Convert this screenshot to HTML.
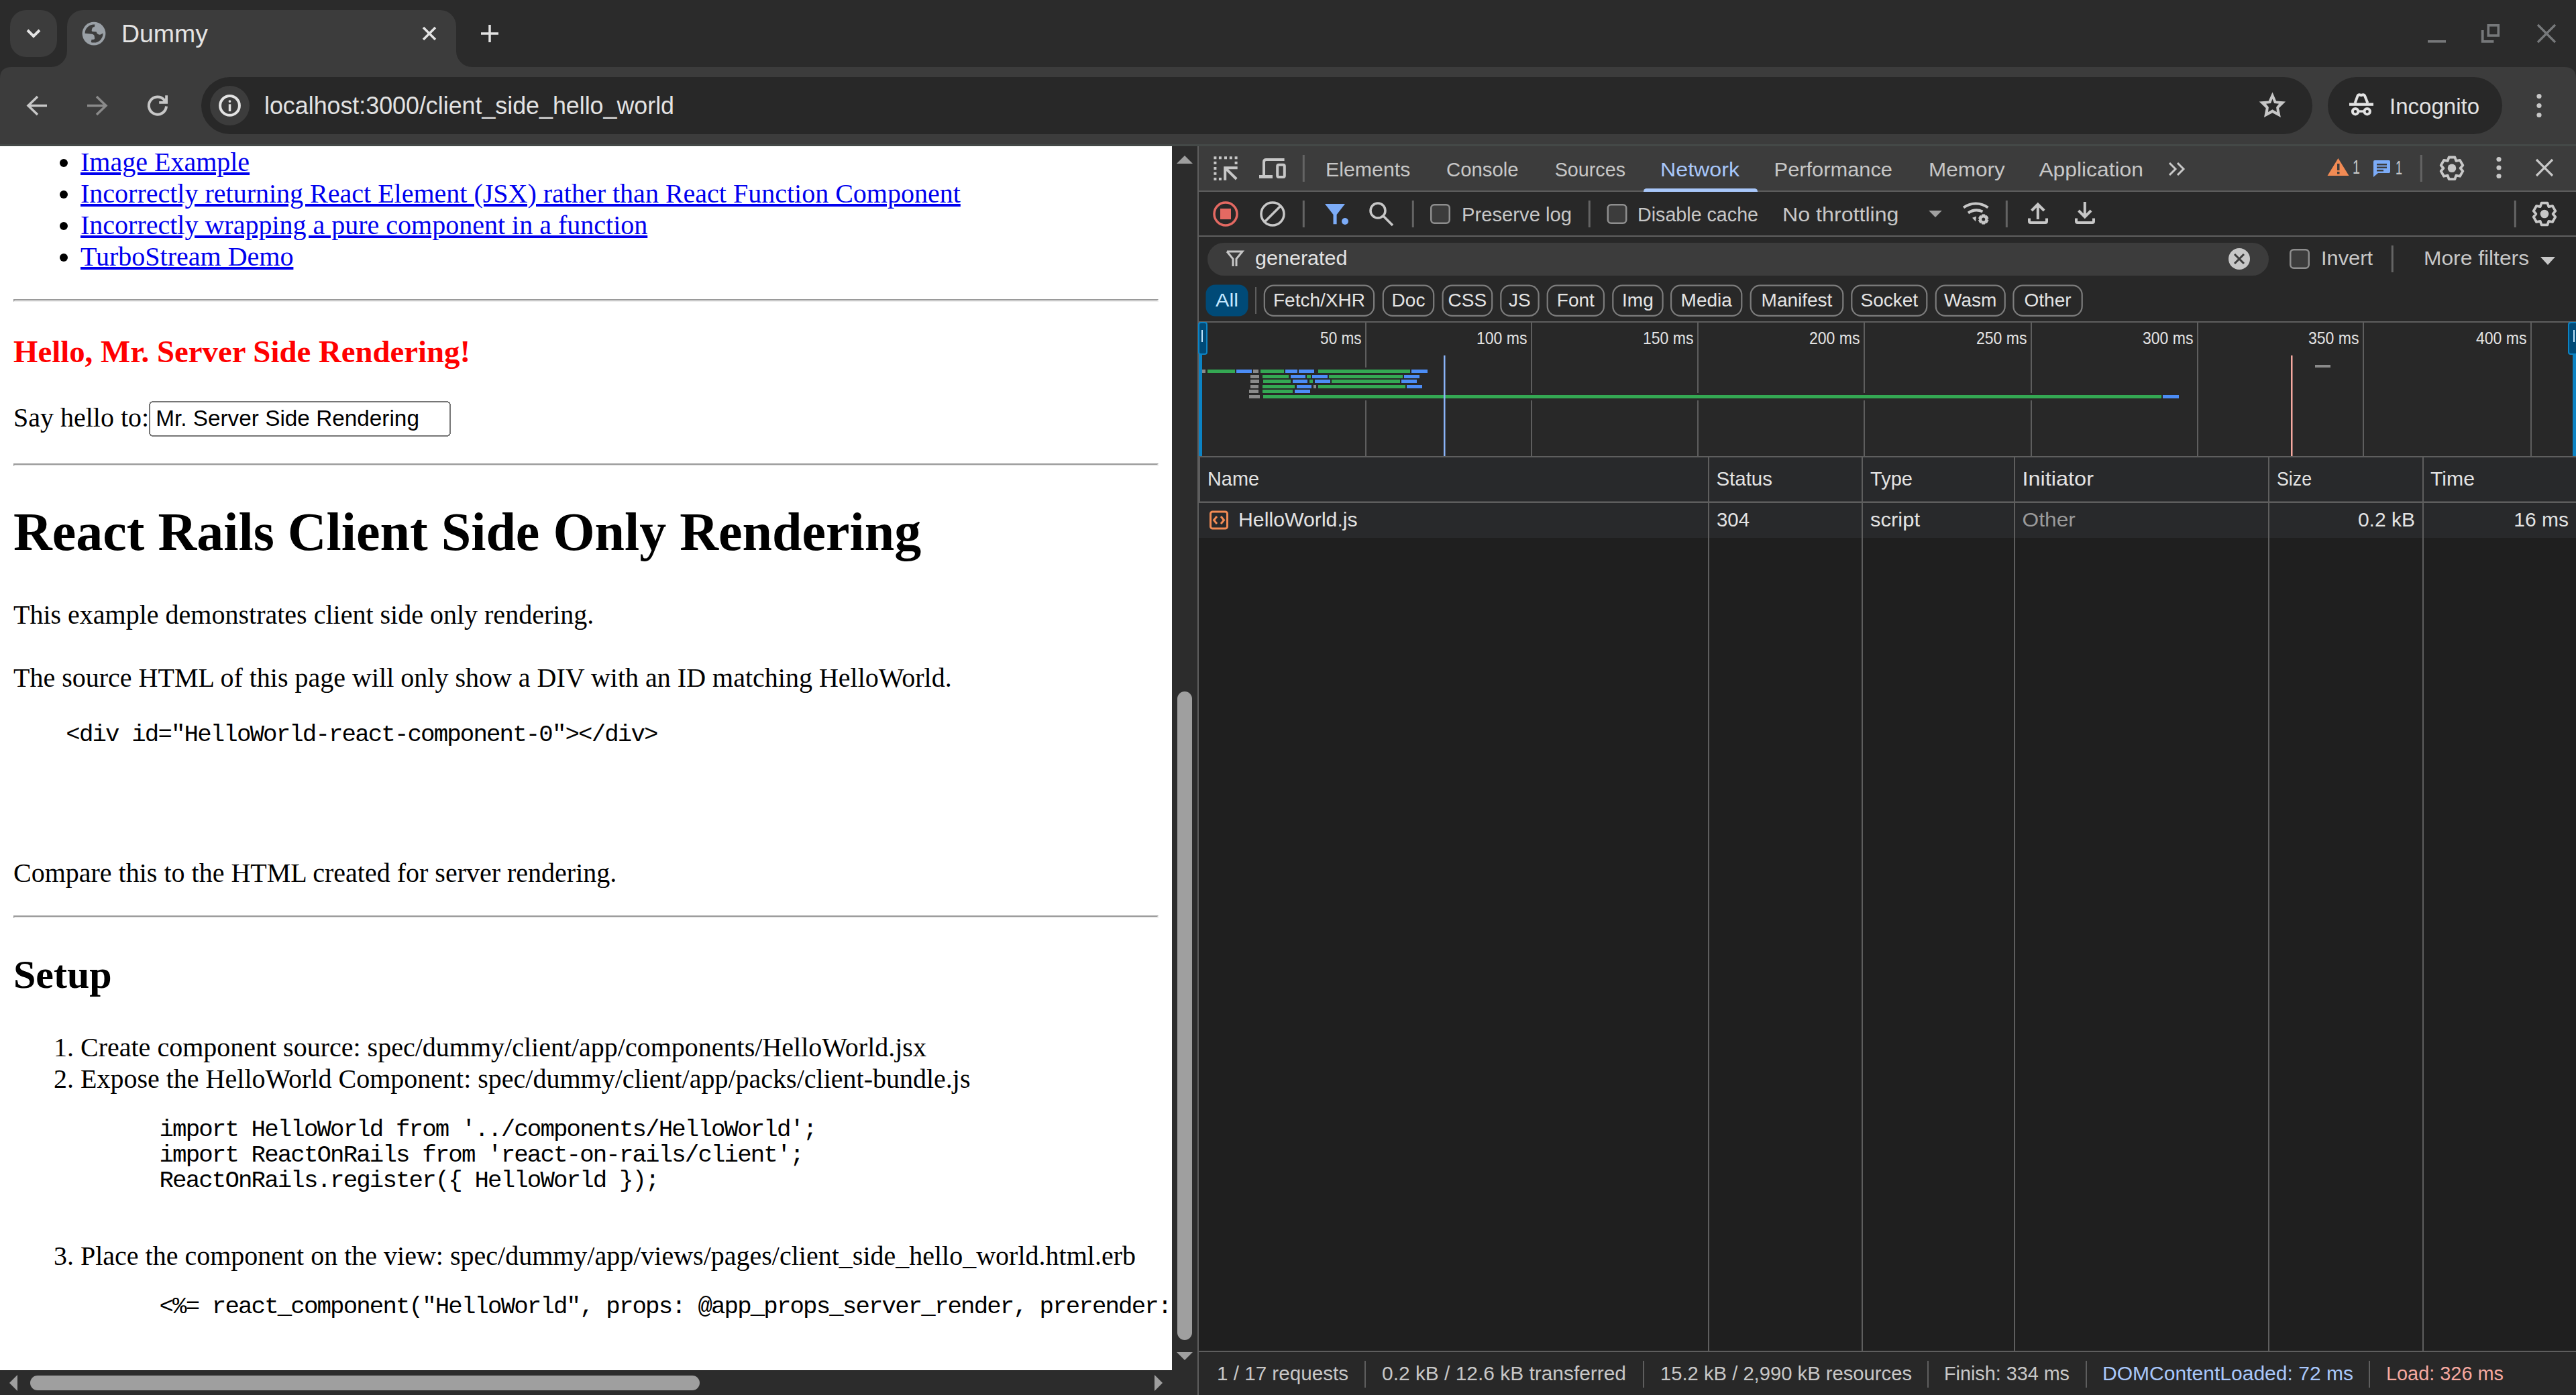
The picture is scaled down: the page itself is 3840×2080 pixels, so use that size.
<!DOCTYPE html><html><head><meta charset="utf-8"><style>
html,body{margin:0;padding:0;}
body{width:3840px;height:2080px;overflow:hidden;position:relative;background:#2b2b2b;font-family:"Liberation Sans",sans-serif;}
#page{position:absolute;left:0;top:218px;width:1747px;height:1825px;overflow:hidden;background:#fff;}
#pz{zoom:2.5;font-family:"Liberation Serif",serif;font-size:16px;color:#000;margin:0 8px;position:relative;top:-16px;}
#pz a{color:#0000ee;}
#pz pre{font-family:"Liberation Mono",monospace;font-size:14.3px;line-height:15.2px;letter-spacing:-0.748px;position:relative;top:0.8px;margin:13px 0;}
#pz input{font-family:"Liberation Sans",sans-serif;font-size:13.333px;}
#ui{position:absolute;left:0;top:0;}
</style></head><body><svg id="ui" width="3840" height="2080" viewBox="0 0 3840 2080" font-family="Liberation Sans, sans-serif"><rect x="0" y="0" width="3840" height="100" fill="#2b2b2b" rx="0" /><rect x="15" y="15" width="70" height="70" fill="#3c3c3c" rx="24" /><path d="M41 45 L50 54 L59 45" fill="none" stroke="#e3e3e3" stroke-width="4"/><path d="M76 100 A24 24 0 0 0 100 76 V39 A24 24 0 0 1 124 15 H656 A24 24 0 0 1 680 39 V76 A24 24 0 0 0 704 100 Z" fill="#3c3c3c"/><path d="M0 218 L0 117 Q0 100 17 100 L3823 100 Q3840 100 3840 117 L3840 218 Z" fill="#3c3c3c"/><rect x="0" y="215" width="3840" height="3" fill="#444947" rx="0" /><circle cx="140" cy="50.1" r="17.4" fill="#9aa0a6"/><circle cx="140" cy="50.1" r="13.5" fill="#3c3c3c"/><path d="M141.8 35.2 A15 15 0 0 1 155 49.8 L153.5 49.5 L150 51.5 Q147 52.2 144.5 49.8 L143.7 47.6 L137.5 47 Q136.5 46.5 136.7 45 L137.6 41.8 Q138.5 40.2 140.8 40 Z" fill="#9aa0a6"/><path d="M126.5 49.7 L137.2 50.8 Q140.5 51.5 140.7 54 L141.2 57.5 Q141 58.8 139 58.9 L136.5 58.9 L135.5 64 A15 15 0 0 1 125 49.5 Z" fill="#9aa0a6"/><text x="181" y="63" font-size="37.5" fill="#e3e3e3" text-anchor="start" textLength="129.0" lengthAdjust="spacingAndGlyphs" font-weight="normal">Dummy</text><path d="M631 41 L649 59 M649 41 L631 59" stroke="#e3e3e3" stroke-width="3.5"/><path d="M730 37 L730 63 M717 50 L743 50" stroke="#e3e3e3" stroke-width="3.5"/><rect x="3619" y="60" width="27" height="3.6" fill="#76787a" rx="0" /><rect x="3709.3" y="37.8" width="15" height="15.2" fill="none" stroke="#76787a" stroke-width="3.6"/><path d="M3700.7 45 V61.9 H3717.4" fill="none" stroke="#76787a" stroke-width="3.8"/><path d="M3783 37 L3809 63 M3809 37 L3783 63" stroke="#76787a" stroke-width="3.4"/><path d="M70 157.5 H44 M56 144 L42 157.5 L56 171" fill="none" stroke="#c7c7c7" stroke-width="3.5"/><path d="M130 157.5 H156 M144 144 L158 157.5 L144 171" fill="none" stroke="#8a8a8a" stroke-width="3.5"/><path d="M244.9 149 A13.1 13.1 0 1 0 248 158.5" fill="none" stroke="#c7c7c7" stroke-width="4"/><path d="M246.2 142.2 H250 V154.7 H237.2 V151.1 H242.5 L246.2 146.5 Z" fill="#c7c7c7"/><rect x="300" y="115" width="3147" height="85" fill="#282828" rx="42.5" /><circle cx="342.5" cy="157.5" r="29.5" fill="#3c3c3c"/><circle cx="342.5" cy="157.4" r="14.4" fill="none" stroke="#e3e3e3" stroke-width="4"/><rect x="340.8" y="155.3" width="3.5" height="10.7" fill="#e3e3e3" rx="0" /><circle cx="342.5" cy="151.1" r="1.9" fill="#e3e3e3"/><text x="394" y="170" font-size="37.5" fill="#e3e3e3" text-anchor="start" textLength="611.0" lengthAdjust="spacingAndGlyphs" font-weight="normal">localhost:3000/client_side_hello_world</text><path fill-rule="evenodd" fill="#c7c7c7" d="M3387.5 137.6 L3393.1 150.6 L3407.1 151.6 L3397.1 161.3 L3399.9 175.1 L3387.5 168.3 L3375 175.1 L3377.7 161.3 L3367.7 151.6 L3381.7 150.6 Z M3387.5 147.4 L3390.1 153.9 L3397.1 154.8 L3393.1 159.7 L3394 167 L3387.5 163.2 L3381 167 L3381.9 159.7 L3378 154.8 L3385 153.9 Z"/><rect x="3470" y="115" width="260" height="85" fill="#282828" rx="42.5" /><path d="M3510.6 153.6 L3514.6 142.6 Q3515.3 141 3517 141.3 L3519.8 142 L3522.6 141.3 Q3524.3 141 3525 142.6 L3529.4 153.6" fill="none" stroke="#e3e3e3" stroke-width="4" stroke-linejoin="round"/><rect x="3502" y="153.5" width="36" height="4.3" fill="#e3e3e3" rx="0" /><circle cx="3511.1" cy="166.2" r="4.2" fill="none" stroke="#e3e3e3" stroke-width="4"/><circle cx="3528.7" cy="166.2" r="4.2" fill="none" stroke="#e3e3e3" stroke-width="4"/><rect x="3515" y="164.3" width="10" height="3.4" fill="#e3e3e3" rx="0" /><text x="3562" y="170" font-size="32.5" fill="#e3e3e3" text-anchor="start" textLength="134.0" lengthAdjust="spacingAndGlyphs" font-weight="normal">Incognito</text><circle cx="3785" cy="143.5" r="3.6" fill="#c7c7c7"/><circle cx="3785" cy="157.5" r="3.6" fill="#c7c7c7"/><circle cx="3785" cy="171.5" r="3.6" fill="#c7c7c7"/><rect x="1747" y="218" width="38" height="1825" fill="#2c2c2c" rx="0" /><path d="M1754 244 L1766 232 L1778 244 Z" fill="#9f9f9f"/><rect x="1755" y="1031" width="22" height="967" fill="#9f9f9f" rx="11" /><path d="M1754 2016 L1778 2016 L1766 2028 Z" fill="#9f9f9f"/><rect x="0" y="2043" width="1785" height="37" fill="#2c2c2c" rx="0" /><path d="M26 2050 L26 2074 L14 2062 Z" fill="#9f9f9f"/><rect x="45" y="2051" width="998" height="22" fill="#9f9f9f" rx="11" /><path d="M1721 2050 L1721 2074 L1733 2062 Z" fill="#9f9f9f"/><rect x="1785" y="218" width="2055" height="1862" fill="#1f1f1f" rx="0" /><rect x="1785" y="218" width="2" height="1862" fill="#5e5e5e" rx="0" /><rect x="1787" y="218" width="2053" height="66" fill="#3c3c3c" rx="0" /><rect x="1787" y="284" width="2053" height="2" fill="#5e5e5e" rx="0" /><g fill="#c7c7c7"><rect x="1809.4" y="233.3" width="4" height="4"/><rect x="1816.9" y="233.3" width="4" height="4"/><rect x="1825.0" y="233.3" width="4" height="4"/><rect x="1832.8" y="233.3" width="4" height="4"/><rect x="1840.6" y="233.3" width="4" height="4"/><rect x="1809.4" y="240.9" width="4" height="4"/><rect x="1809.4" y="249.0" width="4" height="4"/><rect x="1809.4" y="256.8" width="4" height="4"/><rect x="1809.4" y="264.9" width="4" height="4"/><rect x="1840.6" y="240.9" width="4" height="4"/><rect x="1816.9" y="264.9" width="4" height="4"/></g><path d="M1826.2 268.7 V250.2 H1844.7 M1827.5 251.5 L1843.2 267" fill="none" stroke="#c7c7c7" stroke-width="4"/><path d="M1914.6 237.9 H1887.5 Q1884 237.9 1884 241.4 V262" fill="none" stroke="#c7c7c7" stroke-width="4"/><rect x="1877" y="261" width="20" height="4.9" fill="#c7c7c7" rx="0" /><rect x="1904.2" y="245.7" width="10.6" height="18.2" rx="2" fill="none" stroke="#c7c7c7" stroke-width="4"/><rect x="1941.8" y="231" width="3" height="40" fill="#646464" rx="0" /><text x="1976" y="263" font-size="30" fill="#c7c7c7" text-anchor="start" textLength="126.3" lengthAdjust="spacingAndGlyphs" font-weight="normal">Elements</text><text x="2156" y="263" font-size="30" fill="#c7c7c7" text-anchor="start" textLength="107.7" lengthAdjust="spacingAndGlyphs" font-weight="normal">Console</text><text x="2317.7" y="263" font-size="30" fill="#c7c7c7" text-anchor="start" textLength="105.3" lengthAdjust="spacingAndGlyphs" font-weight="normal">Sources</text><text x="2475" y="263" font-size="30" fill="#a8c7fa" text-anchor="start" textLength="118.0" lengthAdjust="spacingAndGlyphs" font-weight="normal">Network</text><text x="2644.6" y="263" font-size="30" fill="#c7c7c7" text-anchor="start" textLength="176.4" lengthAdjust="spacingAndGlyphs" font-weight="normal">Performance</text><text x="2875" y="263" font-size="30" fill="#c7c7c7" text-anchor="start" textLength="113.7" lengthAdjust="spacingAndGlyphs" font-weight="normal">Memory</text><text x="3039.4" y="263" font-size="30" fill="#c7c7c7" text-anchor="start" textLength="155.6" lengthAdjust="spacingAndGlyphs" font-weight="normal">Application</text><path d="M2450 286 V285.5 A4.5 4.5 0 0 1 2454.5 281 H2615.5 A4.5 4.5 0 0 1 2620 285.5 V286 Z" fill="#a8c7fa"/><path d="M3234 243 L3243 252 L3234 261 M3246 243 L3255 252 L3246 261" fill="none" stroke="#c7c7c7" stroke-width="3"/><path d="M3485.5 236 L3501.5 262 L3469.5 262 Z" fill="#f28b54"/><rect x="3484" y="244" width="3.5" height="10" fill="#3c3c3c" rx="0" /><rect x="3484" y="256" width="3.5" height="3.5" fill="#3c3c3c" rx="0" /><text x="3507" y="259" font-size="30" fill="#c7c7c7" text-anchor="start" textLength="11.0" lengthAdjust="spacingAndGlyphs" font-weight="normal">1</text><path d="M3540 239 H3561 Q3563 239 3563 241 V256 Q3563 258 3561 258 H3545 L3538 264 V241 Q3538 239 3540 239 Z" fill="#7cacf8"/><rect x="3543" y="244" width="15" height="2.5" fill="#3c3c3c" rx="0" /><rect x="3543" y="248.5" width="15" height="2.5" fill="#3c3c3c" rx="0" /><rect x="3543" y="253" width="10" height="2.5" fill="#3c3c3c" rx="0" /><text x="3571" y="260" font-size="30" fill="#c7c7c7" text-anchor="start" textLength="10.0" lengthAdjust="spacingAndGlyphs" font-weight="normal">1</text><rect x="3607.8" y="231" width="3" height="40" fill="#646464" rx="0" /><polygon points="3650.63,234.48 3659.37,234.48 3661.30,239.90 3666.95,238.85 3671.32,246.43 3667.59,250.80 3671.32,255.17 3666.95,262.75 3661.30,261.70 3659.37,267.12 3650.63,267.12 3648.70,261.70 3643.05,262.75 3638.68,255.17 3642.41,250.80 3638.68,246.43 3643.05,238.85 3648.70,239.90" fill="none" stroke="#c7c7c7" stroke-width="3.8" stroke-linejoin="round"/><circle cx="3655" cy="250.8" r="6.3" fill="#c7c7c7"/><circle cx="3725" cy="237.5" r="3.6" fill="#c7c7c7"/><circle cx="3725" cy="250" r="3.6" fill="#c7c7c7"/><circle cx="3725" cy="262.5" r="3.6" fill="#c7c7c7"/><path d="M3781 238 L3805 262 M3805 238 L3781 262" stroke="#c7c7c7" stroke-width="3.2"/><rect x="1787" y="286" width="2053" height="65" fill="#282828" rx="0" /><rect x="1787" y="351" width="2053" height="2" fill="#5e5e5e" rx="0" /><circle cx="1827" cy="319" r="17" fill="none" stroke="#e46962" stroke-width="3.5"/><rect x="1819" y="311" width="16" height="16" fill="#e46962" rx="0" /><circle cx="1897" cy="319" r="17" fill="none" stroke="#c7c7c7" stroke-width="3.5"/><path d="M1885 331 L1909 307" stroke="#c7c7c7" stroke-width="3.5"/><rect x="1941.8" y="299" width="3" height="40" fill="#646464" rx="0" /><path d="M1975 304 H2005 L1992.6 320 V334.2 H1987.5 V320 Z" fill="#7cacf8"/><circle cx="2005" cy="330" r="5" fill="#7cacf8"/><circle cx="2054" cy="314" r="11" fill="none" stroke="#c7c7c7" stroke-width="3.5"/><path d="M2062 322 L2076 336" stroke="#c7c7c7" stroke-width="3.5"/><rect x="2104.8" y="299" width="3" height="40" fill="#646464" rx="0" /><rect x="2133.25" y="305.25" width="27.5" height="27.5" fill="#3c3c3c" rx="5" stroke="#8e8e8e" stroke-width="2.5"/><text x="2179" y="329.5" font-size="30" fill="#c7c7c7" text-anchor="start" textLength="164.0" lengthAdjust="spacingAndGlyphs" font-weight="normal">Preserve log</text><rect x="2367.8" y="299" width="3" height="40" fill="#646464" rx="0" /><rect x="2396.75" y="305.25" width="27.5" height="27.5" fill="#3c3c3c" rx="5" stroke="#8e8e8e" stroke-width="2.5"/><text x="2441" y="329.5" font-size="30" fill="#c7c7c7" text-anchor="start" textLength="180.0" lengthAdjust="spacingAndGlyphs" font-weight="normal">Disable cache</text><text x="2657" y="329.5" font-size="30" fill="#c7c7c7" text-anchor="start" textLength="173.5" lengthAdjust="spacingAndGlyphs" font-weight="normal">No throttling</text><path d="M2875.2 314 H2894.8 L2885 324 Z" fill="#a0a0a0"/><path d="M2927 309.5 A30.3 30.3 0 0 1 2963.5 309.5" fill="none" stroke="#c7c7c7" stroke-width="4"/><path d="M2934 317.5 A22 22 0 0 1 2955.5 315.5" fill="none" stroke="#c7c7c7" stroke-width="4"/><path d="M2940 324.8 L2946 322.4 L2945 330.2 Z" fill="#c7c7c7"/><circle cx="2956.7" cy="327" r="9.5" fill="#282828"/><polygon points="2954.54,319.92 2958.86,319.92 2959.51,322.13 2961.75,321.59 2963.91,325.34 2962.32,327.00 2963.91,328.66 2961.75,332.41 2959.51,331.87 2958.86,334.08 2954.54,334.08 2953.89,331.87 2951.65,332.41 2949.49,328.66 2951.08,327.00 2949.49,325.34 2951.65,321.59 2953.89,322.13" fill="#c7c7c7" stroke="#c7c7c7" stroke-width="1" stroke-linejoin="round"/><circle cx="2956.7" cy="327" r="2.5" fill="#282828"/><rect x="2989.8" y="299" width="3" height="40" fill="#646464" rx="0" /><path d="M3037.8 327 V305 M3028.5 314 L3037.8 304.5 L3047.2 314" fill="none" stroke="#c7c7c7" stroke-width="4"/><path d="M3025 325.5 V330 Q3025 332 3027 332 H3049 Q3051 332 3051 330 V325.5" fill="none" stroke="#c7c7c7" stroke-width="4"/><path d="M3107.8 301 V323 M3098.5 314 L3107.8 323.3 L3117.1 314" fill="none" stroke="#c7c7c7" stroke-width="4"/><path d="M3095 325.5 V330 Q3095 332 3097 332 H3119 Q3121 332 3121 330 V325.5" fill="none" stroke="#c7c7c7" stroke-width="4"/><rect x="3747.8" y="299" width="3" height="40" fill="#646464" rx="0" /><polygon points="3788.63,302.68 3797.37,302.68 3799.30,308.10 3804.95,307.05 3809.32,314.63 3805.59,319.00 3809.32,323.37 3804.95,330.95 3799.30,329.90 3797.37,335.32 3788.63,335.32 3786.70,329.90 3781.05,330.95 3776.68,323.37 3780.41,319.00 3776.68,314.63 3781.05,307.05 3786.70,308.10" fill="none" stroke="#c7c7c7" stroke-width="3.8" stroke-linejoin="round"/><circle cx="3793" cy="319" r="6.3" fill="#c7c7c7"/><rect x="1787" y="353" width="2053" height="126" fill="#282828" rx="0" /><rect x="1800" y="362" width="1582" height="49" fill="#3c3c3c" rx="24.5" /><path d="M1829 375 H1852 L1843 386 V397 M1838 397 V386 L1829 375" fill="none" stroke="#c7c7c7" stroke-width="3"/><text x="1871" y="395.3" font-size="30" fill="#e3e3e3" text-anchor="start" textLength="137.5" lengthAdjust="spacingAndGlyphs" font-weight="normal">generated</text><circle cx="3338" cy="386" r="16" fill="#c7c7c7"/><path d="M3331 379 L3345 393 M3345 379 L3331 393" stroke="#3c3c3c" stroke-width="3"/><rect x="3414.25" y="372.25" width="27.5" height="27.5" fill="#3c3c3c" rx="5" stroke="#8e8e8e" stroke-width="2.5"/><text x="3460" y="395.3" font-size="30" fill="#c7c7c7" text-anchor="start" textLength="77.0" lengthAdjust="spacingAndGlyphs" font-weight="normal">Invert</text><rect x="3564.8" y="366" width="3" height="40" fill="#646464" rx="0" /><text x="3613" y="395.3" font-size="30" fill="#c7c7c7" text-anchor="start" textLength="157.0" lengthAdjust="spacingAndGlyphs" font-weight="normal">More filters</text><path d="M3787 383 H3809 L3798 395 Z" fill="#c7c7c7"/><rect x="1797.5" y="424.5" width="63" height="47" fill="#004a77" rx="14" /><text x="1812" y="457" font-size="28" fill="#c2e7ff" text-anchor="start" textLength="34.0" lengthAdjust="spacingAndGlyphs" font-weight="normal">All</text><rect x="1871" y="428" width="2" height="40" fill="#5e5e5e" rx="0" /><rect x="1884.8" y="425.6" width="163.29999999999978" height="45.2" fill="none" rx="14" stroke="#7c7c7c" stroke-width="2.2"/><text x="1966.4499999999998" y="457" font-size="28" fill="#e3e3e3" text-anchor="middle" font-weight="normal">Fetch/XHR</text><rect x="2061.7999999999997" y="425.6" width="75.40000000000036" height="45.2" fill="none" rx="14" stroke="#7c7c7c" stroke-width="2.2"/><text x="2099.5" y="457" font-size="28" fill="#e3e3e3" text-anchor="middle" font-weight="normal">Doc</text><rect x="2150.6" y="425.6" width="73.60000000000018" height="45.2" fill="none" rx="14" stroke="#7c7c7c" stroke-width="2.2"/><text x="2187.4" y="457" font-size="28" fill="#e3e3e3" text-anchor="middle" font-weight="normal">CSS</text><rect x="2237.2999999999997" y="425.6" width="56.3" height="45.2" fill="none" rx="14" stroke="#7c7c7c" stroke-width="2.2"/><text x="2265.45" y="457" font-size="28" fill="#e3e3e3" text-anchor="middle" font-weight="normal">JS</text><rect x="2306.7" y="425.6" width="84.20000000000009" height="45.2" fill="none" rx="14" stroke="#7c7c7c" stroke-width="2.2"/><text x="2348.8" y="457" font-size="28" fill="#e3e3e3" text-anchor="middle" font-weight="normal">Font</text><rect x="2404.2999999999997" y="425.6" width="74.3" height="45.2" fill="none" rx="14" stroke="#7c7c7c" stroke-width="2.2"/><text x="2441.45" y="457" font-size="28" fill="#e3e3e3" text-anchor="middle" font-weight="normal">Img</text><rect x="2491.1" y="425.6" width="105.20000000000009" height="45.2" fill="none" rx="14" stroke="#7c7c7c" stroke-width="2.2"/><text x="2543.7" y="457" font-size="28" fill="#e3e3e3" text-anchor="middle" font-weight="normal">Media</text><rect x="2609.7" y="425.6" width="137.6000000000002" height="45.2" fill="none" rx="14" stroke="#7c7c7c" stroke-width="2.2"/><text x="2678.5" y="457" font-size="28" fill="#e3e3e3" text-anchor="middle" font-weight="normal">Manifest</text><rect x="2760.2999999999997" y="425.6" width="112.00000000000027" height="45.2" fill="none" rx="14" stroke="#7c7c7c" stroke-width="2.2"/><text x="2816.3" y="457" font-size="28" fill="#e3e3e3" text-anchor="middle" font-weight="normal">Socket</text><rect x="2885.7" y="425.6" width="103.00000000000027" height="45.2" fill="none" rx="14" stroke="#7c7c7c" stroke-width="2.2"/><text x="2937.2" y="457" font-size="28" fill="#e3e3e3" text-anchor="middle" font-weight="normal">Wasm</text><rect x="3001.4" y="425.6" width="102.3" height="45.2" fill="none" rx="14" stroke="#7c7c7c" stroke-width="2.2"/><text x="3052.55" y="457" font-size="28" fill="#e3e3e3" text-anchor="middle" font-weight="normal">Other</text><rect x="1787" y="479" width="2053" height="2" fill="#5e5e5e" rx="0" /><rect x="1787" y="481" width="2053" height="199" fill="#282828" rx="0" /><rect x="2035" y="481" width="2" height="199" fill="#5e5e5e" rx="0" /><text x="1968.1" y="512.5" font-size="25" fill="#e3e3e3" text-anchor="start" textLength="61.4" lengthAdjust="spacingAndGlyphs" font-weight="normal">50 ms</text><rect x="2282" y="481" width="2" height="199" fill="#5e5e5e" rx="0" /><text x="2201.0" y="512.5" font-size="25" fill="#e3e3e3" text-anchor="start" textLength="75.5" lengthAdjust="spacingAndGlyphs" font-weight="normal">100 ms</text><rect x="2530" y="481" width="2" height="199" fill="#5e5e5e" rx="0" /><text x="2449.0" y="512.5" font-size="25" fill="#e3e3e3" text-anchor="start" textLength="75.5" lengthAdjust="spacingAndGlyphs" font-weight="normal">150 ms</text><rect x="2778" y="481" width="2" height="199" fill="#5e5e5e" rx="0" /><text x="2697.0" y="512.5" font-size="25" fill="#e3e3e3" text-anchor="start" textLength="75.5" lengthAdjust="spacingAndGlyphs" font-weight="normal">200 ms</text><rect x="3027" y="481" width="2" height="199" fill="#5e5e5e" rx="0" /><text x="2946.0" y="512.5" font-size="25" fill="#e3e3e3" text-anchor="start" textLength="75.5" lengthAdjust="spacingAndGlyphs" font-weight="normal">250 ms</text><rect x="3275" y="481" width="2" height="199" fill="#5e5e5e" rx="0" /><text x="3194.0" y="512.5" font-size="25" fill="#e3e3e3" text-anchor="start" textLength="75.5" lengthAdjust="spacingAndGlyphs" font-weight="normal">300 ms</text><rect x="3522" y="481" width="2" height="199" fill="#5e5e5e" rx="0" /><text x="3441.0" y="512.5" font-size="25" fill="#e3e3e3" text-anchor="start" textLength="75.5" lengthAdjust="spacingAndGlyphs" font-weight="normal">350 ms</text><rect x="3772" y="481" width="2" height="199" fill="#5e5e5e" rx="0" /><text x="3691.0" y="512.5" font-size="25" fill="#e3e3e3" text-anchor="start" textLength="75.5" lengthAdjust="spacingAndGlyphs" font-weight="normal">400 ms</text><rect x="1795" y="548" width="340" height="39" fill="#282828" rx="0" /><rect x="1858" y="586" width="1394" height="11" fill="#282828" rx="0" /><rect x="3448" y="541" width="29" height="10" fill="#282828" rx="0" /><rect x="1789" y="551" width="8" height="5" fill="#8a8a8a" rx="0" /><rect x="1800" y="551" width="41" height="5" fill="#34a853" rx="0" /><rect x="1843" y="551" width="23" height="5" fill="#4c8df6" rx="0" /><rect x="1868" y="551" width="8" height="5" fill="#8a8a8a" rx="0" /><rect x="1879" y="551" width="35" height="5" fill="#34a853" rx="0" /><rect x="1916" y="551" width="18" height="5" fill="#4c8df6" rx="0" /><rect x="1936" y="551" width="23" height="5" fill="#4c8df6" rx="0" /><rect x="1965" y="551" width="137" height="5" fill="#34a853" rx="0" /><rect x="2104" y="551" width="24" height="5" fill="#4c8df6" rx="0" /><rect x="1864" y="559" width="13" height="5" fill="#8a8a8a" rx="0" /><rect x="1882" y="559" width="39" height="5" fill="#34a853" rx="0" /><rect x="1924" y="559" width="22" height="5" fill="#4c8df6" rx="0" /><rect x="1948" y="559" width="6" height="5" fill="#34a853" rx="0" /><rect x="1956" y="559" width="23" height="5" fill="#4c8df6" rx="0" /><rect x="1981" y="559" width="110" height="5" fill="#34a853" rx="0" /><rect x="2093" y="559" width="23" height="5" fill="#4c8df6" rx="0" /><rect x="1864" y="566" width="13" height="5" fill="#8a8a8a" rx="0" /><rect x="1883" y="566" width="41" height="5" fill="#34a853" rx="0" /><rect x="1927" y="566" width="22" height="5" fill="#4c8df6" rx="0" /><rect x="1952" y="566" width="5" height="5" fill="#34a853" rx="0" /><rect x="1960" y="566" width="23" height="5" fill="#4c8df6" rx="0" /><rect x="1985" y="566" width="102" height="5" fill="#34a853" rx="0" /><rect x="2089" y="566" width="23" height="5" fill="#4c8df6" rx="0" /><rect x="1864" y="574" width="12" height="5" fill="#8a8a8a" rx="0" /><rect x="1882" y="574" width="48" height="5" fill="#34a853" rx="0" /><rect x="1933" y="574" width="22" height="5" fill="#4c8df6" rx="0" /><rect x="1958" y="574" width="4" height="5" fill="#8a8a8a" rx="0" /><rect x="1965" y="574" width="130" height="5" fill="#34a853" rx="0" /><rect x="2097" y="574" width="23" height="5" fill="#4c8df6" rx="0" /><rect x="1862" y="581" width="14" height="5" fill="#8a8a8a" rx="0" /><rect x="1882" y="581" width="45" height="5" fill="#34a853" rx="0" /><rect x="1930" y="581" width="23" height="5" fill="#4c8df6" rx="0" /><rect x="1862" y="589" width="16" height="5" fill="#8a8a8a" rx="0" /><rect x="1883" y="589" width="1339" height="5" fill="#34a853" rx="0" /><rect x="3224" y="589" width="24" height="5" fill="#4c8df6" rx="0" /><rect x="3451" y="544" width="23" height="4" fill="#8a8a8a" rx="0" /><rect x="2152" y="530" width="2.5" height="150" fill="#8ab4f8" rx="0" /><rect x="3415" y="530" width="2.5" height="150" fill="#f5a9a0" rx="0" /><rect x="1787" y="481" width="5" height="199" fill="#0b83c4" rx="0" /><rect x="1787" y="481" width="12" height="47" fill="#004a77" rx="3" stroke="#0b83c4" stroke-width="2"/><rect x="1791" y="492" width="2" height="18" fill="#c2e7ff" rx="0" /><rect x="3835" y="481" width="5" height="199" fill="#0b83c4" rx="0" /><rect x="3829" y="481" width="14" height="47" fill="#004a77" rx="3" stroke="#0b83c4" stroke-width="2"/><rect x="3836" y="492" width="2" height="18" fill="#c2e7ff" rx="0" /><rect x="1787" y="680" width="2053" height="2" fill="#5e5e5e" rx="0" /><rect x="1787" y="682" width="2053" height="66" fill="#28292b" rx="0" /><rect x="1787" y="682" width="2" height="66" fill="#5e5e5e" rx="0" /><rect x="1787" y="747.5" width="2053" height="2.5" fill="#5e5e5e" rx="0" /><rect x="1787" y="750" width="2053" height="52" fill="#28292b" rx="0" /><rect x="2546" y="682" width="2" height="1332" fill="#5e5e5e" rx="0" /><rect x="2775" y="682" width="2" height="1332" fill="#5e5e5e" rx="0" /><rect x="3002" y="682" width="2" height="1332" fill="#5e5e5e" rx="0" /><rect x="3381" y="682" width="2" height="1332" fill="#5e5e5e" rx="0" /><rect x="3611" y="682" width="2" height="1332" fill="#5e5e5e" rx="0" /><text x="1800" y="724" font-size="30" fill="#e3e3e3" text-anchor="start" textLength="77.0" lengthAdjust="spacingAndGlyphs" font-weight="normal">Name</text><text x="2558.4" y="724" font-size="30" fill="#e3e3e3" text-anchor="start" textLength="83.6" lengthAdjust="spacingAndGlyphs" font-weight="normal">Status</text><text x="2788" y="724" font-size="30" fill="#e3e3e3" text-anchor="start" textLength="63.0" lengthAdjust="spacingAndGlyphs" font-weight="normal">Type</text><text x="3014.4" y="724" font-size="30" fill="#e3e3e3" text-anchor="start" textLength="106.6" lengthAdjust="spacingAndGlyphs" font-weight="normal">Initiator</text><text x="3394" y="724" font-size="30" fill="#e3e3e3" text-anchor="start" textLength="52.0" lengthAdjust="spacingAndGlyphs" font-weight="normal">Size</text><text x="3623" y="724" font-size="30" fill="#e3e3e3" text-anchor="start" textLength="66.0" lengthAdjust="spacingAndGlyphs" font-weight="normal">Time</text><rect x="1804.5" y="763" width="25" height="25" rx="3" fill="none" stroke="#f28b54" stroke-width="3"/><path d="M1814 770 L1809.5 775.5 L1814 781 M1820 770 L1824.5 775.5 L1820 781" fill="none" stroke="#f28b54" stroke-width="3"/><text x="1846" y="784.7" font-size="30" fill="#e3e3e3" text-anchor="start" textLength="177.7" lengthAdjust="spacingAndGlyphs" font-weight="normal">HelloWorld.js</text><text x="2559" y="784.7" font-size="30" fill="#e3e3e3" text-anchor="start" textLength="49.0" lengthAdjust="spacingAndGlyphs" font-weight="normal">304</text><text x="2788" y="784.7" font-size="30" fill="#e3e3e3" text-anchor="start" textLength="74.0" lengthAdjust="spacingAndGlyphs" font-weight="normal">script</text><text x="3014.6" y="784.7" font-size="30" fill="#9a9a9a" text-anchor="start" textLength="79.2" lengthAdjust="spacingAndGlyphs" font-weight="normal">Other</text><text x="3600" y="784.7" font-size="30" fill="#e3e3e3" text-anchor="end" font-weight="normal">0.2 kB</text><text x="3829" y="784.7" font-size="30" fill="#e3e3e3" text-anchor="end" font-weight="normal">16 ms</text><rect x="1787" y="2014" width="2053" height="2" fill="#5e5e5e" rx="0" /><rect x="1787" y="2016" width="2053" height="64" fill="#282828" rx="0" /><text x="1814" y="2058" font-size="30" fill="#c7c7c7" text-anchor="start" textLength="196.0" lengthAdjust="spacingAndGlyphs" font-weight="normal">1 / 17 requests</text><text x="2060" y="2058" font-size="30" fill="#c7c7c7" text-anchor="start" textLength="364.0" lengthAdjust="spacingAndGlyphs" font-weight="normal">0.2 kB / 12.6 kB transferred</text><text x="2475" y="2058" font-size="30" fill="#c7c7c7" text-anchor="start" textLength="375.0" lengthAdjust="spacingAndGlyphs" font-weight="normal">15.2 kB / 2,990 kB resources</text><text x="2898" y="2058" font-size="30" fill="#c7c7c7" text-anchor="start" textLength="187.0" lengthAdjust="spacingAndGlyphs" font-weight="normal">Finish: 334 ms</text><text x="3134" y="2058" font-size="30" fill="#a8c7fa" text-anchor="start" textLength="374.0" lengthAdjust="spacingAndGlyphs" font-weight="normal">DOMContentLoaded: 72 ms</text><text x="3557" y="2058" font-size="30" fill="#f5a9a0" text-anchor="start" textLength="175.0" lengthAdjust="spacingAndGlyphs" font-weight="normal">Load: 326 ms</text><rect x="2034" y="2029" width="2" height="40" fill="#5e5e5e" rx="0" /><rect x="2449" y="2029" width="2" height="40" fill="#5e5e5e" rx="0" /><rect x="2873" y="2029" width="2" height="40" fill="#5e5e5e" rx="0" /><rect x="3109" y="2029" width="2" height="40" fill="#5e5e5e" rx="0" /><rect x="3531" y="2029" width="2" height="40" fill="#5e5e5e" rx="0" /></svg><div id="page">
<div id="pz">
<ul class="links">
<li><a href="#">Image Example</a></li>
<li><a href="#">Incorrectly returning React Element (JSX) rather than React Function Component</a></li>
<li><a href="#">Incorrectly wrapping a pure component in a function</a></li>
<li><a href="#">TurboStream Demo</a></li>
</ul>
<hr>
<div>
<h3 style="color:red">Hello, Mr. Server Side Rendering!</h3>
<p>Say hello to:<input type="text" value="Mr. Server Side Rendering"></p>
</div>
<hr>
<h1>React Rails Client Side Only Rendering</h1>
<p>This example demonstrates client side only rendering.</p>
<p style="margin-top:18.8px">The source HTML of this page will only show a DIV with an ID matching HelloWorld.</p>
<pre style="margin-top:17px;margin-bottom:12px;top:0.2px">    &lt;div id="HelloWorld-react-component-0"&gt;&lt;/div&gt;
</pre>
<br><br>
<p>Compare this to the HTML created for server rendering.</p>
<hr>
<h2>Setup</h2>
<ol>
<li>Create component source: spec/dummy/client/app/components/HelloWorld.jsx</li>
<li>Expose the HelloWorld Component: spec/dummy/client/app/packs/client-bundle.js
<pre>
      import HelloWorld from '../components/HelloWorld';
      import ReactOnRails from 'react-on-rails/client';
      ReactOnRails.register({ HelloWorld });

</pre>
</li>
<li>Place the component on the view: spec/dummy/app/views/pages/client_side_hello_world.html.erb
<pre>
      &lt;%= react_component("HelloWorld", props: @app_props_server_render, prerender: false, trace: true, id: "HelloWorld-react-component-0") %&gt;
</pre>
</li>
</ol>
</div>
</div>
</body></html>
